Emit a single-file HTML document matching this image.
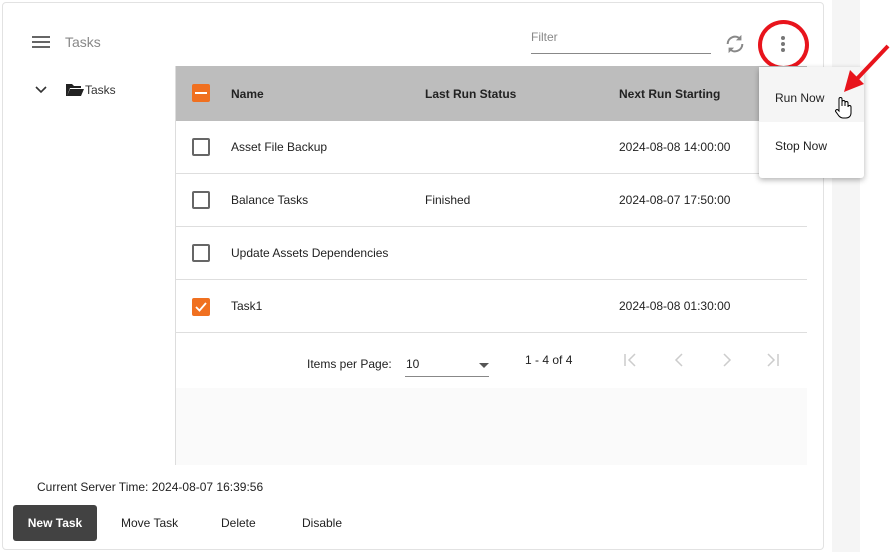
<!DOCTYPE html>
<html><head><style>
*{box-sizing:border-box;margin:0;padding:0}
body{width:892px;height:552px;position:relative;background:#fff;font-family:"Liberation Sans",Arial,sans-serif;font-size:12px;color:#222;overflow:hidden}
.a{position:absolute}
.card{left:2px;top:2px;width:822px;height:548px;border:1px solid #e2e2e2;border-radius:4px}
.strip{left:832px;top:0;width:28px;height:552px;background:#f5f5f5}
.row{left:175px;width:632px;height:53px;border-bottom:1px solid #dedede}
.cb{width:18px;height:18px;border:2px solid #666;border-radius:2px;left:17px;top:17px}
.t{top:19px}
</style></head><body>
<div class="a strip"></div>
<div class="a card"></div>
<div class="a" style="left:32px;top:36px;width:18px;height:2px;background:#666;box-shadow:0 5px 0 #666,0 10px 0 #666"></div>
<div class="a" style="left:65px;top:34px;font-size:14px;color:#888">Tasks</div>
<svg class="a" style="left:35px;top:86px" width="12" height="8"><path d="M1 1l5 5 5-5" stroke="#333" stroke-width="1.6" fill="none"/></svg>
<svg class="a" style="left:66px;top:83px" width="18" height="14"><path d="M0 1h6l2 2h7v2H4L1 13H0z M4 6h14l-3 7H1z" fill="#222"/></svg>
<div class="a" style="left:85px;top:83px;font-size:12px;color:#333">Tasks</div>
<div class="a" style="left:531px;top:30px;color:#888">Filter</div>
<div class="a" style="left:531px;top:53px;width:180px;height:1px;background:#888"></div>
<svg class="a" style="left:724px;top:33px" width="22" height="22" viewBox="0 0 24 24"><path d="M4 12a8 8 0 0 1 14-5.3M20 12a8 8 0 0 1-14 5.3" stroke="#888" stroke-width="2.2" fill="none"/><path d="M19 2v6h-6z M5 22v-6h6z" fill="#888"/></svg>
<div class="a" style="left:781px;top:36px;width:4px;height:4px;border-radius:50%;background:#777;box-shadow:0 6px 0 #777,0 12px 0 #777"></div>
<div class="a" style="left:758px;top:20px;width:51px;height:50px;border:4px solid #e8141c;border-radius:50%"></div>
<div class="a" style="left:175px;top:66px;width:632px;height:55px;background:#bdbdbd;font-weight:bold;font-size:12px">
<div class="a" style="left:17px;top:18px;width:18px;height:18px;background:#f07020;border-radius:2px"><div class="a" style="left:3px;top:8px;width:12px;height:2px;background:#fff"></div></div>
<div class="a" style="left:56px;top:21px">Name</div><div class="a" style="left:250px;top:21px">Last Run Status</div><div class="a" style="left:444px;top:21px">Next Run Starting</div></div>
<div class="a" style="left:175px;top:66px;width:1px;height:399px;background:#ddd"></div>
<div class="a row" style="top:121px"><div class="a cb"></div><div class="a t" style="left:56px">Asset File Backup</div><div class="a t" style="left:444px">2024-08-08 14:00:00</div></div>
<div class="a row" style="top:174px"><div class="a cb"></div><div class="a t" style="left:56px">Balance Tasks</div><div class="a t" style="left:250px">Finished</div><div class="a t" style="left:444px">2024-08-07 17:50:00</div></div>
<div class="a row" style="top:227px"><div class="a cb"></div><div class="a t" style="left:56px">Update Assets Dependencies</div></div>
<div class="a row" style="top:280px"><div class="a" style="left:17px;top:18px;width:18px;height:18px;background:#f07020;border-radius:2px"><svg width="18" height="18"><path d="M4 9l3.5 3.5L14 5" stroke="#fff" stroke-width="1.8" fill="none"/></svg></div><div class="a t" style="left:56px">Task1</div><div class="a t" style="left:444px">2024-08-08 01:30:00</div></div>
<div class="a" style="left:307px;top:357px">Items per Page:</div>
<div class="a" style="left:406px;top:357px">10</div>
<div class="a" style="left:405px;top:376px;width:84px;height:1px;background:#888"></div>
<div class="a" style="left:479px;top:363px;border:5px solid transparent;border-top-color:#555;border-bottom:0"></div>
<div class="a" style="left:525px;top:353px">1 - 4 of 4</div>
<svg class="a" style="left:620px;top:352px" width="170" height="16"><g stroke="#ccc" stroke-width="1.5" fill="none"><path d="M5 2v12M15 2l-6 6 6 6M62 2l-6 6 6 6M104 2l6 6-6 6M148 2l6 6-6 6M158 2v12"/></g></svg>
<div class="a" style="left:176px;top:388px;width:631px;height:77px;background:#fafafa"></div>
<div class="a" style="left:37px;top:480px">Current Server Time: 2024-08-07 16:39:56</div>
<div class="a" style="left:13px;top:505px;width:84px;height:36px;background:#424242;border-radius:3px;color:#fff;font-weight:bold;text-align:center;line-height:36px">New Task</div>
<div class="a" style="left:121px;top:516px">Move Task</div>
<div class="a" style="left:221px;top:516px">Delete</div>
<div class="a" style="left:302px;top:516px">Disable</div>
<div class="a" style="left:759px;top:67px;width:105px;height:111px;background:#fff;box-shadow:0 2px 6px rgba(0,0,0,.3);border-radius:3px">
<div class="a" style="left:0;top:0;width:105px;height:55px;background:#f5f5f5"></div>
<div class="a" style="left:16px;top:24px">Run Now</div><div class="a" style="left:16px;top:72px">Stop Now</div></div>
<svg class="a" style="left:832px;top:40px" width="60" height="82"><path d="M56 6L22 42" stroke="#e8141c" stroke-width="4"/><path d="M12 52l6-22 14 14z" fill="#e8141c"/><path d="M7 71v-12a1.5 1.5 0 0 1 3 0v7v-4a1.5 1.5 0 0 1 3 0v4v-3a1.5 1.5 0 0 1 3 0v4a1.5 1.5 0 0 1 3 0v6c0 3-2 5-5 5h-3c-2 0-3-1-4-2l-3-4a1.3 1.3 0 0 1 2-2z" fill="#fff" stroke="#000" stroke-width="1"/></svg>
</body></html>
